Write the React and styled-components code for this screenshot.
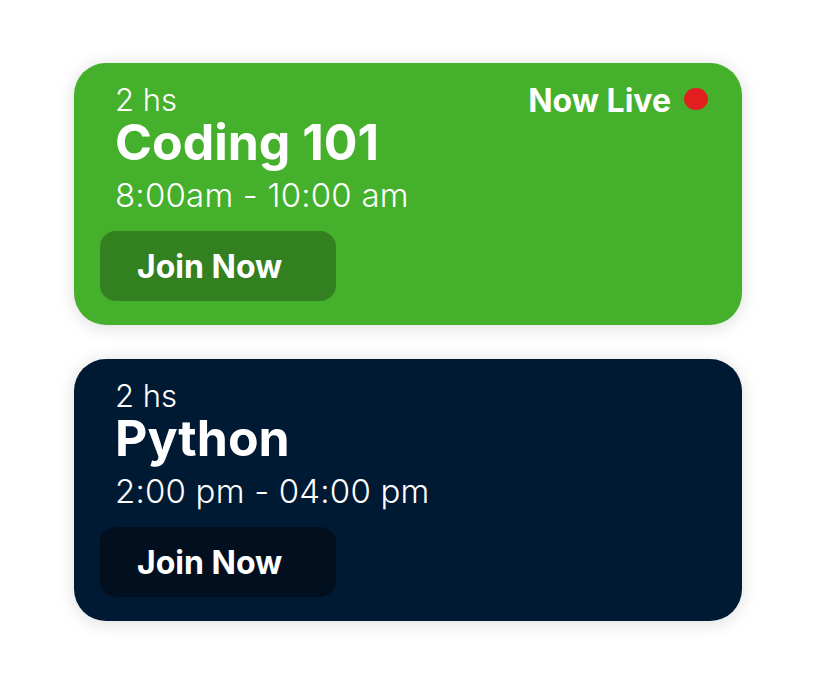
import React from 'react';
import styled, { createGlobalStyle } from 'styled-components';

const GlobalStyle = createGlobalStyle`
  body {
    margin: 0;
    background: #ffffff;
    font-family: Inter, "Noto Sans", sans-serif;
  }
`;

const classes = [
  { id: 1, length: '2 hs', title: 'Coding 101', time: '8:00am - 10:00 am', live: true, variant: 'green' },
  { id: 2, length: '2 hs', title: 'Python', time: '2:00 pm - 04:00 pm', live: false, variant: 'navy' },
];

const palette = {
  green: { bg: '#44b02b', button: '#338021' },
  navy: { bg: '#011a33', button: '#020f1f' },
};

const App = () => (
  <Root>
    <GlobalStyle />
    <List>
      {classes.map((item) => (
        <Card key={item.id} variant={item.variant}>
          <Info>
            <Length>{item.length}</Length>
            <Title>{item.title}</Title>
            <Time>{item.time}</Time>
            <JoinButton variant={item.variant}>Join Now</JoinButton>
          </Info>
          {item.live && (
            <Live>
              Now Live
              <Dot />
            </Live>
          )}
        </Card>
      ))}
    </List>
  </Root>
);

const Root = styled.div`
  width: 816px;
  height: 686px;
  padding: 63px 0 0 74px;
  box-sizing: border-box;
`;

const List = styled.div`
  display: flex;
  flex-direction: column;
  gap: 34px;
  width: 668px;
`;

const Card = styled.div`
  display: flex;
  justify-content: space-between;
  align-items: flex-start;
  height: 262px;
  box-sizing: border-box;
  padding: 20px 34px 0 26px;
  border-radius: 32px;
  background-color: ${({ variant }) => palette[variant].bg};
  box-shadow: 0 2px 18px rgba(0, 0, 0, 0.14);
  color: #ffffff;
`;

const Info = styled.div`
  display: flex;
  flex-direction: column;
  align-items: flex-start;
`;

const Length = styled.div`
  padding-left: 15px;
  font-size: 31px;
  line-height: 34px;
  font-weight: 300;
`;

const Title = styled.div`
  padding-left: 15px;
  font-size: 50px;
  line-height: 50px;
  font-weight: 700;
`;

const Time = styled.div`
  margin-top: 8px;
  padding-left: 15px;
  font-size: 33px;
  line-height: 40px;
  font-weight: 300;
  letter-spacing: 0.2px;
`;

const JoinButton = styled.button`
  margin-top: 16px;
  width: 236px;
  height: 70px;
  border: none;
  border-radius: 16px;
  padding: 0 0 0 37px;
  text-align: left;
  font-family: inherit;
  font-size: 32px;
  font-weight: 700;
  color: #ffffff;
  background-color: ${({ variant }) => palette[variant].button};
`;

const Live = styled.div`
  display: flex;
  align-items: center;
  gap: 13px;
  font-size: 32px;
  line-height: 36px;
  font-weight: 700;
`;

const Dot = styled.span`
  width: 24px;
  height: 22px;
  margin-bottom: 5px;
  border-radius: 50%;
  background-color: #e11f1f;
`;

export default App;
